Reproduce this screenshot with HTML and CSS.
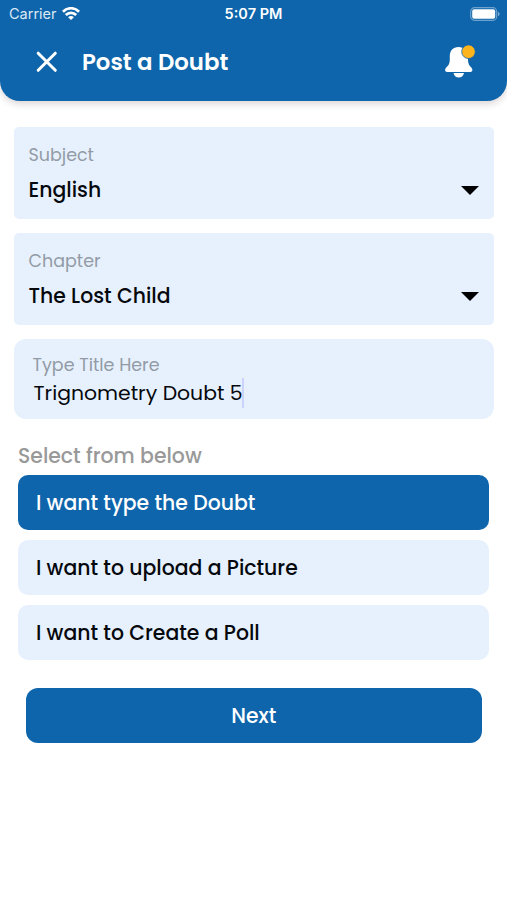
FILE: index.html
```html
<!DOCTYPE html>
<html lang="en">
<head>
    <meta charset="UTF-8">
    <meta name="viewport" content="width=device-width, initial-scale=1.0">
    <title>Post a Doubt</title>
    <link rel="stylesheet" href="styles.css">
</head>
<body>
    <header class="header">
        <div class="status-bar">
            <div class="carrier">
                <span>Carrier</span>
                <svg width="18" height="14" viewBox="0 0 18 14" fill="none" stroke="#fff" stroke-width="2.7">
                    <path d="M0.9 4.7C5.4 0.1 12.6 0.1 17.1 4.7"/>
                    <path d="M3.8 8C6.7 5.1 11.3 5.1 14.2 8"/>
                    <path d="M9 13.1L6.1 10.2C7.7 8.7 10.3 8.7 11.9 10.2Z" fill="#fff" stroke="none"/>
                </svg>
            </div>
            <div class="time">5:07 PM</div>
            <div class="battery">
                <svg width="31" height="14" viewBox="0 0 31 14">
                    <rect x="0.7" y="0.7" width="26" height="12.6" rx="3.8" fill="none" stroke="#fff" stroke-opacity="0.4" stroke-width="1.2"/>
                    <rect x="2.2" y="2.2" width="23" height="9.6" rx="2" fill="#fff"/>
                    <path d="M28 4.8C30.2 5.6 30.2 8.4 28 9.2Z" fill="#fff" fill-opacity="0.45"/>
                </svg>
            </div>
        </div>
        <div class="title-bar">
            <svg width="22" height="22" viewBox="0 0 22 22" stroke="#fff" stroke-width="3" stroke-linecap="round">
                <path d="M2.2 2.2L19.3 19.3M19.3 2.2L2.2 19.3"/>
            </svg>
            <h1>Post a Doubt</h1>
            <svg width="32" height="34" viewBox="0 0 32 34">
                <path d="M14.5 2C9 2 5.8 5.8 5.8 11V15C5.8 19 4 20.8 2 22.8C0.5 24.5 1 27 3 27H26.5C28.5 27 29 24.5 27.5 22.8C25.5 20.8 24 19 24 15V11C24 5.8 20 2 14.5 2Z" fill="#fff"/>
                <path d="M9.5 28H20C19.3 31 17.3 32.6 14.75 32.6S10.2 31 9.5 28Z" fill="#fff"/>
                <circle cx="24.5" cy="6.7" r="6.8" fill="#fcb41c" stroke="#0e65ab" stroke-width="0.8"/>
            </svg>
        </div>
    </header>

    <main>
        <div class="select-box">
            <label>Subject</label>
            <div class="select-value">
                <span>English</span>
                <span class="caret"></span>
            </div>
        </div>

        <div class="select-box">
            <label>Chapter</label>
            <div class="select-value">
                <span>The Lost Child</span>
                <span class="caret"></span>
            </div>
        </div>

        <div class="title-box">
            <label>Type Title Here</label>
            <div class="title-input"><span>Trignometry Doubt 5</span><i class="cursor"></i></div>
        </div>

        <h2>Select from below</h2>
        <div class="options">
            <div class="option active">I want type the Doubt</div>
            <div class="option">I want to upload a Picture</div>
            <div class="option">I want to Create a Poll</div>
        </div>

        <button class="next">Next</button>
    </main>
</body>
</html>
```

FILE: styles.css
```css
* {
    box-sizing: border-box;
}

body {
    margin: 0;
    background: #fff;
    color: #05080d;
    font-family: Poppins, Inter, sans-serif;
}

svg {
    display: block;
}

.header {
    height: 100.5px;
    background: #0e65ab;
    color: #fff;
    border-radius: 0 0 20px 20px;
    box-shadow: 0 3px 7px rgba(60, 30, 40, 0.18);
}

.status-bar {
    display: grid;
    grid-template-columns: 1fr auto 1fr;
    align-items: center;
    height: 27px;
    padding: 0 6px 0 9px;
    font-family: Inter, sans-serif;
    font-size: 14.5px;
}

.carrier {
    display: flex;
    align-items: center;
    gap: 5px;
    color: #dbe9f6;
}

.time {
    margin-left: -3px;
    font-weight: 600;
}

.battery {
    justify-self: end;
}

.title-bar {
    display: flex;
    align-items: center;
    height: 70px;
    padding: 0 31px 0 36px;
}

h1 {
    flex: 1;
    margin: 0 0 0 24px;
    font-size: 22.8px;
    font-weight: 600;
}

main {
    padding: 26.5px 13px 0 14px;
}

label {
    display: block;
    color: #929ba5;
    font-size: 17.5px;
    line-height: 24px;
}

.select-box {
    height: 92px;
    margin-bottom: 14px;
    padding: 15.5px 15px 0 14.5px;
    border-radius: 5px;
    background: #e7f1fe;
}

.select-value {
    display: flex;
    align-items: center;
    justify-content: space-between;
    margin-top: 8px;
    font-size: 20.4px;
    font-weight: 500;
    line-height: 31px;
}

.caret {
    border: 9px solid transparent;
    border-top-color: #000;
    border-bottom: 0;
}

.title-box {
    height: 80px;
    padding: 13.5px 19px 0 18.5px;
    border-radius: 12px;
    background: #e7f1fe;
}

.title-input {
    display: flex;
    align-items: center;
    height: 32px;
    padding-left: 1px;
    font-size: 20.4px;
}

.cursor {
    width: 2px;
    height: 30px;
    margin-left: -1px;
    background: #c9d3fb;
}

h2 {
    margin: 21px 0 3px 4px;
    color: #999;
    font-size: 20.4px;
    font-weight: 500;
    line-height: 32px;
}

.options {
    display: grid;
    gap: 10px;
    padding: 0 5px 0 4.4px;
}

.option {
    height: 55px;
    padding-left: 17.5px;
    border-radius: 10px;
    background: #e7f1fe;
    font-size: 20.4px;
    font-weight: 500;
    line-height: 57px;
}

.option.active {
    background: #0e65ab;
    color: #fff;
}

.next {
    display: block;
    width: calc(100% - 24.5px);
    height: 55px;
    margin: 27.5px 12.5px 0 12px;
    padding: 2px 0 0;
    border: 0;
    border-radius: 12px;
    background: #0e65ab;
    color: #fff;
    font: inherit;
    font-size: 20.4px;
    font-weight: 500;
}
```
